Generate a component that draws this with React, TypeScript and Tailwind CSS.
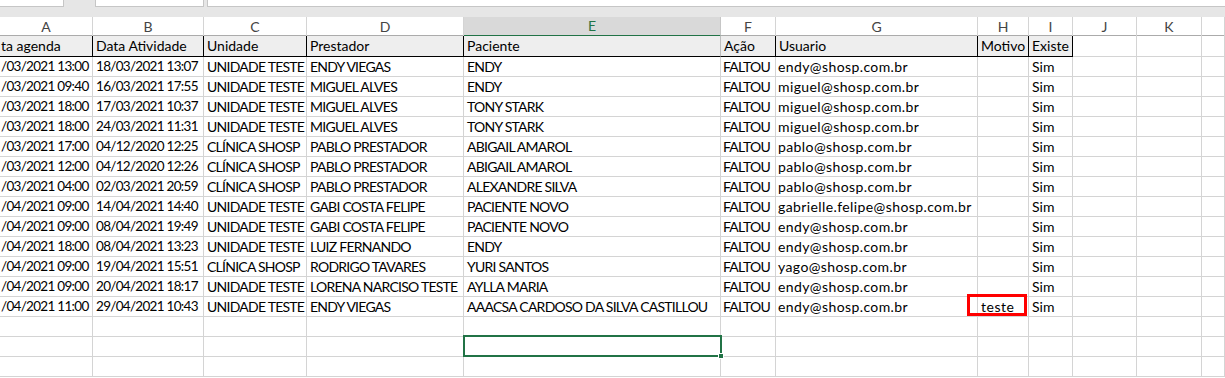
import React from 'react';

type Row = string[];

const cols = [93, 111, 103, 157, 257, 55, 202, 51, 44, 64, 65, 23];
const letters = ['A', 'B', 'C', 'D', 'E', 'F', 'G', 'H', 'I', 'J', 'K', ''];
const headers = ['ta agenda', 'Data Atividade', 'Unidade', 'Prestador', 'Paciente', 'Ação', 'Usuario', 'Motivo', 'Existe'];

// letter spacing per column, to get Calibri-like widths out of Lato
const tracking = [
  'text-[13.5px] tracking-[-0.7px] pl-[1px]',
  'text-[13.5px] tracking-[-0.7px] pl-[3px]',
  'text-[14px] tracking-[-0.75px] pl-[3px]',
  'text-[14px] tracking-[-0.75px] pl-[3px]',
  'text-[14px] tracking-[-0.75px] pl-[3px]',
  'text-[14px] tracking-[-0.8px] pl-[2px]',
  'text-[14px] tracking-[0.4px] pl-[2px]',
  'text-[14px] tracking-[0.5px] pl-[3px]',
  'text-[14px] pl-[3px]',
  '',
  '',
  '',
];

const rows: Row[] = [
  ['/03/2021 13:00', '18/03/2021 13:07', 'UNIDADE TESTE', 'ENDY VIEGAS', 'ENDY', 'FALTOU', 'endy@shosp.com.br', '', 'Sim'],
  ['/03/2021 09:40', '16/03/2021 17:55', 'UNIDADE TESTE', 'MIGUEL ALVES', 'ENDY', 'FALTOU', 'miguel@shosp.com.br', '', 'Sim'],
  ['/03/2021 18:00', '17/03/2021 10:37', 'UNIDADE TESTE', 'MIGUEL ALVES', 'TONY STARK', 'FALTOU', 'miguel@shosp.com.br', '', 'Sim'],
  ['/03/2021 18:00', '24/03/2021 11:31', 'UNIDADE TESTE', 'MIGUEL ALVES', 'TONY STARK', 'FALTOU', 'miguel@shosp.com.br', '', 'Sim'],
  ['/03/2021 17:00', '04/12/2020 12:25', 'CLÍNICA SHOSP', 'PABLO PRESTADOR', 'ABIGAIL AMAROL', 'FALTOU', 'pablo@shosp.com.br', '', 'Sim'],
  ['/03/2021 12:00', '04/12/2020 12:26', 'CLÍNICA SHOSP', 'PABLO PRESTADOR', 'ABIGAIL AMAROL', 'FALTOU', 'pablo@shosp.com.br', '', 'Sim'],
  ['/03/2021 04:00', '02/03/2021 20:59', 'CLÍNICA SHOSP', 'PABLO PRESTADOR', 'ALEXANDRE SILVA', 'FALTOU', 'pablo@shosp.com.br', '', 'Sim'],
  ['/04/2021 09:00', '14/04/2021 14:40', 'UNIDADE TESTE', 'GABI COSTA FELIPE', 'PACIENTE NOVO', 'FALTOU', 'gabrielle.felipe@shosp.com.br', '', 'Sim'],
  ['/04/2021 09:00', '08/04/2021 19:49', 'UNIDADE TESTE', 'GABI COSTA FELIPE', 'PACIENTE NOVO', 'FALTOU', 'endy@shosp.com.br', '', 'Sim'],
  ['/04/2021 18:00', '08/04/2021 13:23', 'UNIDADE TESTE', 'LUIZ FERNANDO', 'ENDY', 'FALTOU', 'endy@shosp.com.br', '', 'Sim'],
  ['/04/2021 09:00', '19/04/2021 15:51', 'CLÍNICA SHOSP', 'RODRIGO TAVARES', 'YURI SANTOS', 'FALTOU', 'yago@shosp.com.br', '', 'Sim'],
  ['/04/2021 09:00', '20/04/2021 18:17', 'UNIDADE TESTE', 'LORENA NARCISO TESTE', 'AYLLA MARIA', 'FALTOU', 'endy@shosp.com.br', '', 'Sim'],
  ['/04/2021 11:00', '29/04/2021 10:43', 'UNIDADE TESTE', 'ENDY VIEGAS', 'AAACSA CARDOSO DA SILVA CASTILLOU', 'FALTOU', 'endy@shosp.com.br', 'teste', 'Sim'],
];

const gridCols = 'grid grid-cols-[93px_111px_103px_157px_257px_55px_202px_51px_44px_64px_65px_23px]';

const App = () => {
  return (
    <div
      className="relative w-[1225px] h-[378px] overflow-hidden bg-white text-black"
      style={{ fontFamily: 'Lato, "Liberation Sans", sans-serif' }}
    >
      {/* toolbar remnants */}
      <div className="flex h-[7px] bg-[#e6e6e6]">
        <div className="w-[64px] bg-white border-r border-b border-[#c6c6c6]" />
        <div className="w-[31px]" />
        <div className="w-[109px] bg-white border-x border-b border-[#c6c6c6]" />
        <div className="w-[3px]" />
        <div className="flex-1 bg-white border-l border-b border-[#c6c6c6]" />
      </div>
      <div className="h-[10px] bg-[#e6e6e6]" />

      {/* column letters */}
      <div className={`${gridCols} h-[19px] border-b border-[#ababab]`}>
        {letters.map((l, i) =>
          l === 'E' ? (
            <div
              key={i}
              className="flex items-center justify-center bg-[#d9d9d9] border-r border-[#c6c6c6] border-b-2 border-b-[#217346] -mb-px text-[14px] leading-[18px] text-[#217346]"
            >
              {l}
            </div>
          ) : (
            <div
              key={i}
              className="flex items-center justify-center border-r border-[#d4d4d4] text-[14px] leading-[18px] text-[#444444]"
            >
              {l}
            </div>
          )
        )}
      </div>

      {/* header row */}
      <div className={`${gridCols} h-[21px]`}>
        {cols.map((_, i) => {
          if (i < 9) {
            const rightGray = i === 4;
            return (
              <div
                key={i}
                className={`bg-[#eeeeee] border-b border-black ${rightGray ? 'border-r border-r-[#bdbdbd]' : 'border-r'} ${i === 0 ? 'pl-[1px]' : 'pl-[3px]'} text-[14px] leading-[20px] whitespace-nowrap overflow-hidden`}
              >
                {headers[i]}
              </div>
            );
          }
          return <div key={i} className="border-r border-b border-[#d4d4d4]" />;
        })}
      </div>

      {/* data rows */}
      {rows.map((r, ri) => (
        <div key={ri} className={`${gridCols} h-[20px]`}>
          {cols.map((_, i) => (
            <div
              key={i}
              className={`border-r border-b border-[#d4d4d4] ${tracking[i]} leading-[19px] whitespace-nowrap overflow-hidden`}
            >
              {r[i] ?? ''}
            </div>
          ))}
        </div>
      ))}

      {/* empty rows */}
      {[0, 1, 2].map((ri) => (
        <div key={`e${ri}`} className={`${gridCols} h-[20px]`}>
          {cols.map((_, i) => (
            <div key={i} className="border-r border-b border-[#d4d4d4]" />
          ))}
        </div>
      ))}

      {/* selected cell E15 */}
      <div className="absolute left-[463px] top-[335px] w-[259px] h-[22px] border-2 border-[#217346]" />
      <div className="absolute left-[718px] top-[353px] w-[6px] h-[6px] bg-[#217346] border border-white" />

      {/* red annotation */}
      <div className="absolute left-[967px] top-[294px] w-[60px] h-[22px] border-[3px] border-[#ff0000]" />
    </div>
  );
};

export default App;
